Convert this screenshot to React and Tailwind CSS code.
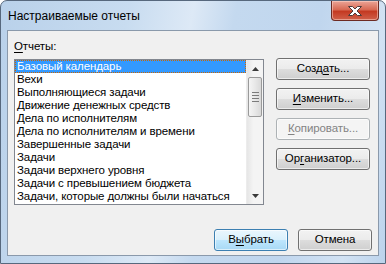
import React from 'react';

const reports = [
  'Базовый календарь',
  'Вехи',
  'Выполняющиеся задачи',
  'Движение денежных средств',
  'Дела по исполнителям',
  'Дела по исполнителям и времени',
  'Завершенные задачи',
  'Задачи',
  'Задачи верхнего уровня',
  'Задачи с превышением бюджета',
  'Задачи, которые должны были начаться',
];

const font = { fontFamily: '"Liberation Sans", Arial, sans-serif' };

const Btn = ({ children, disabled, primary, className = '' }) => {
  let look =
    'border-[#707070] text-black bg-[linear-gradient(to_bottom,#f2f2f2_0%,#ebebeb_50%,#dddddd_51%,#cfcfcf_100%)]';
  if (primary)
    look =
      'border-[#3c7fb1] text-black bg-[linear-gradient(to_bottom,#eaf6fd_0%,#d9f0fc_50%,#bee6fd_51%,#a7d9f5_100%)]';
  if (disabled) look = 'border-[#adb2b5] text-[#838383] bg-[#f4f4f4]';
  return (
    <div
      className={`flex items-center justify-center h-[22px] rounded-[3px] border text-[11.5px] tracking-[-0.1px] leading-none shadow-[inset_0_0_0_1px_rgba(255,255,255,0.6)] ${look} ${className}`}
    >
      {children}
    </div>
  );
};

const U = ({ children }) => <span className="underline underline-offset-[2px] decoration-1">{children}</span>;

const CloseButton = () => (
  <div className="w-[48px] h-[20px] rounded-b-[4px] border border-t-0 border-[#6d2b23] bg-[linear-gradient(to_bottom,#eba597_0%,#d86a54_45%,#c43a22_55%,#d0604a_100%)] flex items-center justify-center shadow-[inset_0_0_0_1px_rgba(255,220,210,0.5)]">
    <svg width="18" height="12" viewBox="0 0 18 12">
      <path
        d="M2.5 1.5h4l2.5 2.5 2.5-2.5h4l-4.5 4.5 4.5 4.5h-4l-2.5-2.5-2.5 2.5h-4l4.5-4.5z"
        fill="#ffffff"
        stroke="#4b3b3b"
        strokeWidth="1"
        strokeLinejoin="round"
      />
    </svg>
  </div>
);

const ScrollBar = () => (
  <div className="w-[17px] h-full flex flex-col bg-[linear-gradient(to_right,#e6e6e6,#f4f4f4_40%,#f4f4f4)] border-l border-[#ececec]">
    <div className="h-[17px] flex items-center justify-center">
      <svg width="7" height="4" viewBox="0 0 7 4">
        <path d="M3.5 0L7 4H0z" fill="#3a3a3a" />
      </svg>
    </div>
    <div className="h-[40px] mx-[1px] rounded-[2px] border border-[#9a9a9a] bg-[linear-gradient(to_right,#f5f5f5,#e8e8e8_50%,#d9d9d9)] flex flex-col items-center justify-center gap-[2px]">
      <div className="w-[7px] h-px bg-[#7b7b7b]" />
      <div className="w-[7px] h-px bg-[#7b7b7b]" />
      <div className="w-[7px] h-px bg-[#7b7b7b]" />
      <div className="w-[7px] h-px bg-[#7b7b7b]" />
    </div>
    <div className="flex-1" />
    <div className="h-[17px] flex items-center justify-center">
      <svg width="7" height="4" viewBox="0 0 7 4">
        <path d="M0 0h7L3.5 4z" fill="#3a3a3a" />
      </svg>
    </div>
  </div>
);

export default function App() {
  return (
    <div
      className="w-[386px] h-[264px] overflow-hidden rounded-t-[7px] border border-[#57687d] bg-[linear-gradient(100deg,#b9d1ea_0%,#c8dcf0_30%,#dde9f6_45%,#c4d9ef_55%,#c0d6ee_75%,#d2e2f3_90%,#bcd3ec_100%)] flex flex-col"
      style={font}
    >
      {/* заголовок */}
      <div className="h-[29px] flex items-start">
        <div className="pl-[7px] pt-[8px] text-[12px] text-black leading-[14px]">Настраиваемые отчеты</div>
        <div className="flex-1" />
        <div className="mr-[6px]">
          <CloseButton />
        </div>
      </div>

      {/* клиентская область */}
      <div className="mx-[6px] h-[226px] border border-[#8a99ab] bg-[#f0f0f0] flex flex-col px-[6px] pt-[7px]">
        <div className="text-[11.5px] tracking-[-0.1px] leading-[16px] text-black">
          <U>О</U>тчеты:
        </div>
        <div className="flex mt-[5px]">
          <div className="w-[250px] h-[146px] border border-[#828790] bg-white flex">
            <div className="flex-1 flex flex-col">
              {reports.map((r, i) => (
                <div
                  key={r}
                  className={`h-[13px] text-[11.5px] tracking-[-0.1px] leading-[13px] pl-[2px] whitespace-nowrap ${
                    i === 0
                      ? 'bg-[#3399ff] text-white outline-1 outline-dotted outline-[#cc6600] -outline-offset-1'
                      : 'text-black'
                  }`}
                >
                  {r}
                </div>
              ))}
            </div>
            <ScrollBar />
          </div>
          <div className="ml-[12px] -mt-px w-[94px] flex flex-col gap-[8px]">
            <Btn>
              Созд<U>а</U>ть...
            </Btn>
            <Btn>
              <U>И</U>зменить...
            </Btn>
            <Btn disabled>
              <U>К</U>опировать...
            </Btn>
            <Btn>
              Ор<U>г</U>анизатор...
            </Btn>
          </div>
        </div>
        <div className="flex-1" />
        <div className="flex justify-end gap-[10px] pb-[4px]">
          <Btn primary className="w-[74px]">
            В<U>ы</U>брать
          </Btn>
          <Btn className="w-[74px]">Отмена</Btn>
        </div>
      </div>
    </div>
  );
}
